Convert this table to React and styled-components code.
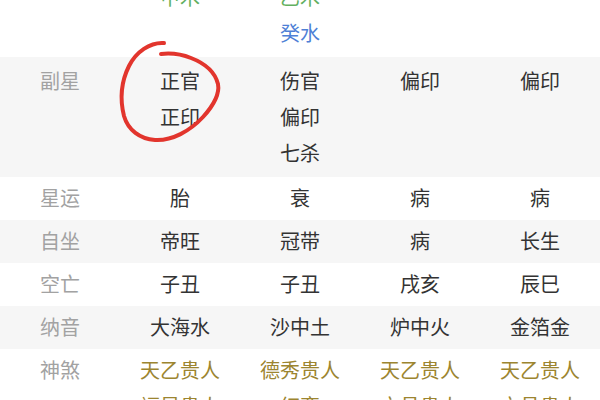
import React from "react";
import styled, { createGlobalStyle } from "styled-components";

const GlobalStyle = createGlobalStyle`
  html, body {
    margin: 0;
    padding: 0;
    background: #ffffff;
    overflow: hidden;
  }
  body {
    font-family: "Noto Sans CJK SC", "Noto Sans", sans-serif;
  }
`;

const Page = styled.div`
  position: relative;
  width: 600px;
  height: 400px;
  overflow: hidden;
`;

const Table = styled.div`
  display: flex;
  flex-direction: column;
  margin-top: -27px;
`;

const Row = styled.div`
  display: grid;
  grid-template-columns: repeat(5, 120px);
  padding: ${(p) => (p.$tall ? "6px 0" : "3px 0 4px")};
  background: ${(p) => (p.$shade ? "#f6f6f6" : "#ffffff")};
`;

const Label = styled.div`
  text-align: center;
  font-size: 20px;
  line-height: 36px;
  color: #a2a2a2;
`;

const Cell = styled.div`
  display: flex;
  flex-direction: column;
  align-items: center;
`;

const colors = {
  wood: "#62b060",
  water: "#4e7fd6",
  gold: "#9c8530",
  plain: "#333333",
};

const Line = styled.span`
  font-size: 20px;
  line-height: 36px;
  color: ${(p) => colors[p.$tone || "plain"]};
  white-space: nowrap;
`;

const Marker = styled.svg`
  position: absolute;
  left: 0;
  top: 0;
  pointer-events: none;
`;

const rows = [
  {
    label: "",
    tall: true,
    cells: [
      [["甲木", "wood"]],
      [["乙木", "wood"], ["癸水", "water"]],
      [],
      [],
    ],
  },
  {
    label: "副星",
    shade: true,
    tall: true,
    cells: [["正官", "正印"], ["伤官", "偏印", "七杀"], ["偏印"], ["偏印"]],
  },
  { label: "星运", cells: [["胎"], ["衰"], ["病"], ["病"]] },
  { label: "自坐", shade: true, cells: [["帝旺"], ["冠带"], ["病"], ["长生"]] },
  { label: "空亡", cells: [["子丑"], ["子丑"], ["戌亥"], ["辰巳"]] },
  { label: "纳音", shade: true, cells: [["大海水"], ["沙中土"], ["炉中火"], ["金箔金"]] },
  {
    label: "神煞",
    cells: [
      [["天乙贵人", "gold"], ["福星贵人", "gold"]],
      [["德秀贵人", "gold"], ["红鸾", "gold"]],
      [["天乙贵人", "gold"], ["文昌贵人", "gold"]],
      [["天乙贵人", "gold"], ["文昌贵人", "gold"]],
    ],
  },
];

function App() {
  return (
    <Page>
      <GlobalStyle />
      <Table>
        {rows.map((row, i) => (
          <Row key={i} $shade={row.shade} $tall={row.tall}>
            <Label>{row.label}</Label>
            {row.cells.map((cell, j) => (
              <Cell key={j}>
                {cell.map((item, k) => {
                  const [text, tone] = Array.isArray(item) ? item : [item];
                  return (
                    <Line key={k} $tone={tone}>
                      {text}
                    </Line>
                  );
                })}
              </Cell>
            ))}
          </Row>
        ))}
      </Table>
      <Marker width="600" height="400" viewBox="0 0 600 400">
        <path
          d="M164 43 C150 42 136 52 129 66 C121 82 120 100 124 116 C128 130 140 139 155 140 C172 141 190 131 203 117 C213 106 220 95 218 84 C215 72 204 63 191 58 C181 54 170 53 161 54"
          fill="none"
          stroke="#e2352d"
          strokeWidth="4"
          strokeLinecap="round"
          strokeLinejoin="round"
        />
      </Marker>
    </Page>
  );
}

export default App;
